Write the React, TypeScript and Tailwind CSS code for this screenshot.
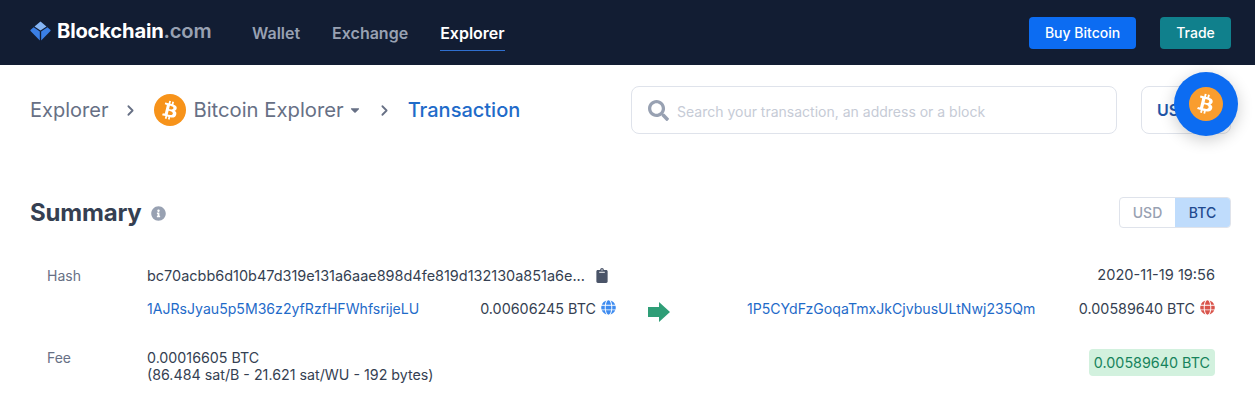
import React from "react";
import {
  FaBtc,
  FaCaretDown,
  FaClipboard,
  FaGlobe,
  FaInfoCircle,
  FaSearch,
} from "react-icons/fa";
import { ChevronRight } from "lucide-react";

const BtcCoin = ({ className }: { className: string }) => (
  <span className={`flex items-center justify-center rounded-full text-white ${className}`}>
    <FaBtc className="w-[58%] h-[58%] rotate-[14deg]" />
  </span>
);

const Logo = () => (
  <svg viewBox="0 0 22 20" className="w-[21px] h-[20px]">
    <path d="M11 0 L17.3 5.2 L11 9.6 L4.7 5.2 Z" fill="#85b5f5" />
    <path d="M3.8 6.2 L10.3 10.6 L10.3 20 L0.8 10.2 C0.2 9.6 0.2 9 0.8 8.6 Z" fill="#3a7fe6" />
    <path d="M18.2 6.2 L11.7 10.6 L11.7 20 L21.2 10.2 C21.8 9.6 21.8 9 21.2 8.6 Z" fill="#3a7fe6" />
  </svg>
);

const Header = () => (
  <header className="h-[65px] bg-[#121d33] flex items-center justify-between pl-[30px] pr-6">
    <div className="flex items-center">
      <div className="flex items-center gap-[6px] w-[222px] -mt-[3px]">
        <Logo />
        <span className="text-[20.2px] font-bold tracking-[-0.2px] text-white">
          Blockchain<span className="text-[#98a1b2] font-semibold">.com</span>
        </span>
      </div>
      <nav className="flex items-start gap-8 text-[16px] font-semibold text-[#98a1b2]">
        <a className="h-[36px] pt-[6px]">Wallet</a>
        <a className="h-[36px] pt-[6px]">Exchange</a>
        <a className="h-[36px] pt-[6px] text-white border-b border-[#2f6fd0]">Explorer</a>
      </nav>
    </div>
    <div className="flex items-center gap-6 text-[14px] font-medium text-white">
      <button className="w-[107px] h-8 rounded bg-[#0c6cf2]">Buy Bitcoin</button>
      <button className="w-[71px] h-8 rounded bg-[#10808c]">Trade</button>
    </div>
  </header>
);

const Breadcrumb = () => (
  <div className="flex items-center justify-between pl-[30px] pr-6 pt-[21px]">
    <div className="flex items-center text-[20px] text-[#677085]">
      <span>Explorer</span>
      <ChevronRight className="w-[17px] h-[17px] ml-[14px] mr-[15px] text-[#677085]" strokeWidth={2.5} />
      <BtcCoin className="w-8 h-8 text-[17px] bg-[#f7931a]" />
      <span className="ml-[7px] text-[20.25px]">Bitcoin Explorer</span>
      <FaCaretDown className="w-[14px] h-[14px] ml-[4px] text-[#677085]" />
      <ChevronRight className="w-[17px] h-[17px] ml-[14px] mr-[15px] text-[#677085]" strokeWidth={2.5} />
      <span className="text-[#1f6bc9] font-medium">Transaction</span>
    </div>
    <div className="flex items-center gap-6">
      <div className="w-[486px] h-12 rounded-lg border border-[#dfe3eb] flex items-center pl-[16px] gap-[8px]">
        <FaSearch className="w-[21px] h-[21px] text-[#98a1b2]" />
        <span className="text-[14px] text-[#c6cbd6] pt-[2px]">Search your transaction, an address or a block</span>
      </div>
      <div className="relative w-[90px] h-12 rounded-lg border border-[#dfe3eb] flex items-center pl-[15px] text-[16px] font-semibold text-[#1f55a8]">
        USD
        {/* floating currency button */}
        <div className="absolute -top-[15px] left-[32px] w-16 h-16 rounded-full bg-[#0c6cf2] shadow-[0_4px_16px_rgba(0,0,0,0.2)] flex items-center justify-center">
          <BtcCoin className="w-[34px] h-[34px] text-[18px] bg-[#f99d2e]" />
        </div>
      </div>
    </div>
  </div>
);

const Globe = ({ color }: { color: string }) => (
  <FaGlobe className={`w-[15px] h-[15px] -mt-[3px] ${color}`} />
);

const Summary = () => (
  <section className="pl-[30px] pr-6 pt-[60px]">
    <div className="flex items-center justify-between">
      <div className="flex items-center gap-[9px]">
        <h2 className="text-[24px] font-bold text-[#353f52] tracking-[-0.2px] mt-[1px]">Summary</h2>
        <FaInfoCircle className="w-[15px] h-[15px] text-[#98a1b2] mt-[1px]" />
      </div>
      <div className="flex w-[112px] h-[31px] rounded text-[14px] font-medium overflow-hidden border border-[#dfe3eb]">
        <span className="w-[55px] flex items-center justify-center text-[#98a1b2]">USD</span>
        <span className="flex-1 flex items-center justify-center bg-[#bfdcfc] text-[#1f4a8f]">BTC</span>
      </div>
    </div>

    <div className="pl-[17px] pr-[16px] pt-[34px] text-[14.35px] text-[#353f52]">
      <div className="flex">
        <span className="w-[100px] text-[#677085] text-[14px]">Hash</span>
        <div className="flex-1 flex flex-col gap-[12px]">
          <div className="flex justify-between h-[21px] items-center">
            <div className="flex items-center gap-[11px]">
              <span className="text-[14.46px]">bc70acbb6d10b47d319e131a6aae898d4fe819d132130a851a6e...</span>
              <FaClipboard className="w-[12px] h-[15px] text-[#4a5468]" />
            </div>
            <span className="text-[14.6px]">2020-11-19 19:56</span>
          </div>
          <div className="flex items-center h-[21px]">
            <div className="w-[469px] flex items-center justify-between">
              <a className="text-[14.1px] text-[#1f6bc9]">1AJRsJyau5p5M36z2yfRzfHFWhfsrijeLU</a>
              <div className="flex items-center gap-[5px]">
                <span>0.00606245 BTC</span>
                <Globe color="text-[#3d8bf0]" />
              </div>
            </div>
            <svg viewBox="0 0 22 20" className="w-[22px] h-5 ml-[32px] mt-[6px]">
              <path d="M0 5 H11 V0 L22 10 L11 20 V15 H0 Z" fill="#2f9e77" />
            </svg>
            <div className="flex-1 ml-[77px] flex items-center justify-between">
              <a className="text-[14.1px] text-[#1f6bc9]">1P5CYdFzGoqaTmxJkCjvbusULtNwj235Qm</a>
              <div className="flex items-center gap-[5px]">
                <span>0.00589640 BTC</span>
                <Globe color="text-[#d9534a]" />
              </div>
            </div>
          </div>
        </div>
      </div>

      <div className="flex pt-[30px]">
        <span className="w-[100px] text-[#677085] text-[14px] leading-[17px]">Fee</span>
        <div className="flex-1 flex justify-between items-start">
          <div className="leading-[17px] text-[14.25px]">
            <div>0.00016605 BTC</div>
            <div>(86.484 sat/B - 21.621 sat/WU - 192 bytes)</div>
          </div>
          <span className="h-[27px] px-[5px] flex items-center rounded bg-[#d2f1de] text-[#17835c]">0.00589640 BTC</span>
        </div>
      </div>
    </div>
  </section>
);

export default function App() {
  return (
    <div className="w-[1255px] h-[400px] overflow-hidden bg-white font-['Inter',sans-serif]">
      <Header />
      <Breadcrumb />
      <Summary />
    </div>
  );
}
